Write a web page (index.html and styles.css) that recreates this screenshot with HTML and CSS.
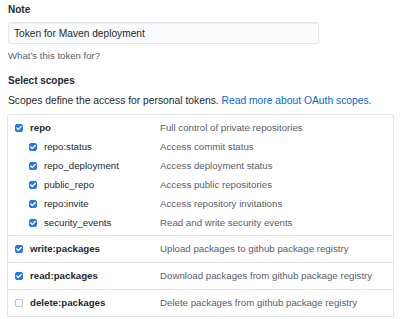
FILE: index.html
```html
<!DOCTYPE html>
<html lang="en">
<head>
    <meta charset="UTF-8">
    <title>New personal access token</title>
    <link rel="stylesheet" href="styles.css">
</head>
<body>
    <div class="token-form">
        <div class="form-group">
            <label class="form-label" for="note">Note</label>
            <input type="text" id="note" class="form-input" value="Token for Maven deployment">
            <p class="note">What’s this token for?</p>
        </div>

        <h3 class="section-title">Select scopes</h3>
        <p class="section-desc">Scopes define the access for personal tokens. <a href="#">Read more about OAuth scopes.</a></p>

        <div class="scopes-box">
            <div class="scope-group">
                <div class="scope-row">
                    <span class="scope-name parent"><span class="cb checked"></span>repo</span>
                    <span class="scope-desc">Full control of private repositories</span>
                </div>
                <div class="scope-row child">
                    <span class="scope-name"><span class="cb checked"></span>repo:status</span>
                    <span class="scope-desc">Access commit status</span>
                </div>
                <div class="scope-row child">
                    <span class="scope-name"><span class="cb checked"></span>repo_deployment</span>
                    <span class="scope-desc">Access deployment status</span>
                </div>
                <div class="scope-row child">
                    <span class="scope-name"><span class="cb checked"></span>public_repo</span>
                    <span class="scope-desc">Access public repositories</span>
                </div>
                <div class="scope-row child">
                    <span class="scope-name"><span class="cb checked"></span>repo:invite</span>
                    <span class="scope-desc">Access repository invitations</span>
                </div>
                <div class="scope-row child">
                    <span class="scope-name"><span class="cb checked"></span>security_events</span>
                    <span class="scope-desc">Read and write security events</span>
                </div>
            </div>
            <div class="scope-group">
                <div class="scope-row">
                    <span class="scope-name parent"><span class="cb checked"></span>write:packages</span>
                    <span class="scope-desc">Upload packages to github package registry</span>
                </div>
            </div>
            <div class="scope-group">
                <div class="scope-row">
                    <span class="scope-name parent"><span class="cb checked"></span>read:packages</span>
                    <span class="scope-desc">Download packages from github package registry</span>
                </div>
            </div>
            <div class="scope-group">
                <div class="scope-row">
                    <span class="scope-name parent"><span class="cb"></span>delete:packages</span>
                    <span class="scope-desc">Delete packages from github package registry</span>
                </div>
            </div>
        </div>
    </div>
</body>
</html>
```

FILE: styles.css
```css
body {
    margin: 0;
    background: #fff;
    font-family: 'Liberation Sans', Arial, sans-serif;
    font-size: 9.7px;
    color: #24292e;
    overflow: hidden;
}
.token-form {
    padding: 2px 8px 0 8px;
}
.form-label {
    display: block;
    font-size: 10px;
    font-weight: 700;
    line-height: 16px;
}
.form-input {
    display: block;
    box-sizing: border-box;
    width: 311px;
    height: 22px;
    margin-top: 4px;
    padding: 0 5px;
    font-family: inherit;
    font-size: 10.2px;
    color: #24292e;
    background: #fafbfc;
    border: 1px solid #e1e4e8;
    border-radius: 3px;
    box-shadow: inset 0 1px 1px rgba(27,31,35,0.05);
}
.note {
    margin: 6px 0 0 0;
    font-size: 9.6px;
    line-height: 12px;
    color: #586069;
}
.section-title {
    margin: 12px 0 0 0;
    font-size: 10px;
    font-weight: 700;
    line-height: 14px;
}
.section-desc {
    margin: 6px 0 0 0;
    font-size: 10.3px;
    line-height: 14px;
    white-space: nowrap;
}
.section-desc a {
    color: #0366d6;
    text-decoration: none;
}
.scopes-box {
    margin: 6px 0 0 -1px;
    width: 385px;
    border: 1px solid #e1e4e8;
    border-bottom: 0;
    border-radius: 3px 3px 0 0;
}
.scope-group {
    padding: 3px 0 4px 0;
    border-bottom: 1px solid #e1e4e8;
}
.scope-group:first-child {
    padding: 3px 0 3px 0;
}
.scope-row {
    display: flex;
    align-items: center;
    height: 19px;
}
.scope-name {
    display: flex;
    align-items: center;
    width: 145px;
    padding-left: 7px;
}
.scope-name.parent {
    font-weight: 700;
}
.child .scope-name {
    width: 131px;
    padding-left: 21px;
}
.scope-desc {
    color: #586069;
}
.cb {
    box-sizing: border-box;
    flex: none;
    width: 8px;
    height: 8px;
    margin-right: 7px;
    border: 1px solid #b7bcc2;
    border-radius: 2px;
    background: #fff;
}
.cb.checked {
    border-color: #2276f0;
    background: #2276f0 url("data:image/svg+xml,%3Csvg xmlns='http://www.w3.org/2000/svg' viewBox='0 0 8 8'%3E%3Cpath d='M1.8 4.1l1.5 1.5L6.2 2.5' fill='none' stroke='%23fff' stroke-width='1.4' stroke-linecap='round' stroke-linejoin='round'/%3E%3C/svg%3E") center/8px 8px no-repeat;
}
```
